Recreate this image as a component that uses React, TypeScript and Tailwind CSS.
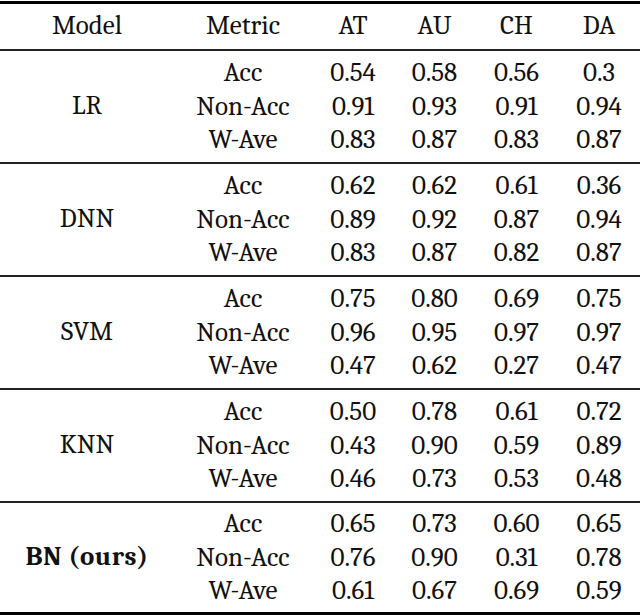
const cols = 'grid grid-cols-[174px_138px_82px_81px_83px_82px]';
const cell = 'text-center font-serif leading-[33.5px]';

type Group = {
  model: string;
  bold?: boolean;
  rows: { metric: string; values: string[] }[];
};

const groups: Group[] = [
  {
    model: 'LR',
    rows: [
      { metric: 'Acc', values: ['0.54', '0.58', '0.56', '0.3'] },
      { metric: 'Non-Acc', values: ['0.91', '0.93', '0.91', '0.94'] },
      { metric: 'W-Ave', values: ['0.83', '0.87', '0.83', '0.87'] },
    ],
  },
  {
    model: 'DNN',
    rows: [
      { metric: 'Acc', values: ['0.62', '0.62', '0.61', '0.36'] },
      { metric: 'Non-Acc', values: ['0.89', '0.92', '0.87', '0.94'] },
      { metric: 'W-Ave', values: ['0.83', '0.87', '0.82', '0.87'] },
    ],
  },
  {
    model: 'SVM',
    rows: [
      { metric: 'Acc', values: ['0.75', '0.80', '0.69', '0.75'] },
      { metric: 'Non-Acc', values: ['0.96', '0.95', '0.97', '0.97'] },
      { metric: 'W-Ave', values: ['0.47', '0.62', '0.27', '0.47'] },
    ],
  },
  {
    model: 'KNN',
    rows: [
      { metric: 'Acc', values: ['0.50', '0.78', '0.61', '0.72'] },
      { metric: 'Non-Acc', values: ['0.43', '0.90', '0.59', '0.89'] },
      { metric: 'W-Ave', values: ['0.46', '0.73', '0.53', '0.48'] },
    ],
  },
  {
    model: 'BN (ours)',
    bold: true,
    rows: [
      { metric: 'Acc', values: ['0.65', '0.73', '0.60', '0.65'] },
      { metric: 'Non-Acc', values: ['0.76', '0.90', '0.31', '0.78'] },
      { metric: 'W-Ave', values: ['0.61', '0.67', '0.69', '0.59'] },
    ],
  },
];

const headers = ['Model', 'Metric', 'AT', 'AU', 'CH', 'DA'];

export default function App() {
  return (
    <div className="w-[640px] h-[616px] bg-white text-[#111] text-[27px] font-serif overflow-hidden">
      <div className="h-[1px]" />
      {/* top rule */}
      <div className="h-[3px] bg-black" />

      {/* Header */}
      <div className={`${cols} h-[45px] items-center pb-[2px]`}>
        {headers.map((h) => (
          <div key={h} className="text-center font-serif leading-none">
            {h}
          </div>
        ))}
      </div>
      <div className="h-[2px] bg-[#222]" />

      {groups.map((g, gi) => {
        const last = gi === groups.length - 1;
        return (
          <div key={g.model}>
            <div className={`${cols} ${last ? 'h-[109px]' : 'h-[111px]'} content-center`}>
              <div
                className={
                  g.bold
                    ? 'row-span-3 flex items-center justify-center font-serif font-bold tracking-[0.5px]'
                    : 'row-span-3 flex items-center justify-center font-serif'
                }
              >
                {g.model}
              </div>
              {g.rows.map((r) => (
                <div key={r.metric} className="contents">
                  <div className={cell}>{r.metric}</div>
                  {r.values.map((v, i) => (
                    <div key={i} className={cell}>
                      {v}
                    </div>
                  ))}
                </div>
              ))}
            </div>
            {last ? <div className="h-[3px] bg-black" /> : <div className="h-[2px] bg-[#222]" />}
          </div>
        );
      })}
    </div>
  );
}
